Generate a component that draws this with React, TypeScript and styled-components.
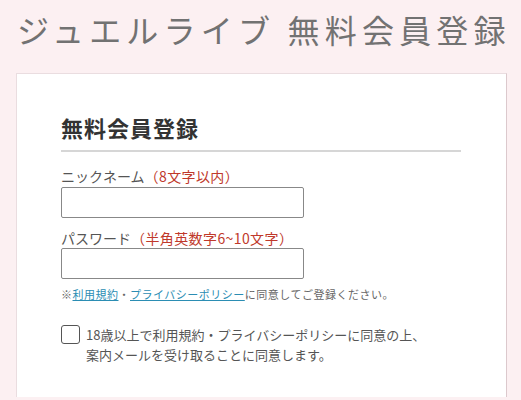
import React from 'react';
import styled, { createGlobalStyle } from 'styled-components';

const GlobalStyle = createGlobalStyle`
  body {
    margin: 0;
    background: #fcf0f2;
    font-family: 'Noto Sans CJK JP', 'Noto Sans', sans-serif;
    color: #555;
  }
`;

const Page = styled.div`
  padding: 5px 14px 0 16px;
`;

const PageTitle = styled.h1`
  margin: 0 0 20px 1px;
  font-size: 32px;
  line-height: 48px;
  font-weight: 400;
  letter-spacing: 5.2px;
  color: #727272;
  white-space: nowrap;
`;

const Card = styled.section`
  background: #fff;
  border: 1px solid #eadde0;
  border-right-color: #dcc9cd;
  border-bottom: none;
  padding: 38px 44px 32px;
`;

const Form = styled.div`
  width: 400px;
`;

const Heading = styled.h2`
  margin: 0;
  padding-bottom: 8px;
  border-bottom: 2px solid #d6d6d6;
  font-size: 22px;
  line-height: 30px;
  font-weight: 700;
  letter-spacing: 1px;
  color: #333;
`;

const Field = styled.div<{ $gap: number }>`
  margin-top: ${(p) => p.$gap}px;
`;

const Label = styled.div`
  font-size: 14px;
  line-height: 20px;
  color: #555;
`;

const Hint = styled.span`
  color: #c0392b;
  letter-spacing: 0.4px;
`;

const Input = styled.input`
  display: block;
  box-sizing: border-box;
  width: 243px;
  height: 31px;
  margin-top: 0.5px;
  border: 1px solid #888;
  border-radius: 2px;
  background: #fff;
`;

const Note = styled.p`
  margin: 7px 0 0;
  font-size: 11px;
  line-height: 16px;
  letter-spacing: 0.5px;
  color: #666;
`;

const TermLink = styled.a`
  color: #2b8db3;
  text-decoration: underline;
`;

const CheckRow = styled.label`
  display: flex;
  align-items: flex-start;
  gap: 6px;
  margin-top: 23px;
`;

const Box = styled.span`
  flex: none;
  box-sizing: border-box;
  width: 19px;
  height: 19px;
  border: 1px solid #555;
  border-radius: 3px;
  background: #fff;
`;

const CheckText = styled.span`
  font-size: 13px;
  line-height: 20px;
  color: #555;
`;

export default function App() {
  return (
    <>
      <GlobalStyle />
      <Page>
        <PageTitle>ジュエルライブ 無料会員登録</PageTitle>
        <Card>
          <Form>
            <Heading>無料会員登録</Heading>
            <Field $gap={14}>
              <Label>
                ニックネーム<Hint>（8文字以内）</Hint>
              </Label>
              <Input type="text" />
            </Field>
            <Field $gap={10}>
              <Label>
                パスワード<Hint>（半角英数字6~10文字）</Hint>
              </Label>
              <Input type="password" />
            </Field>
            <Note>
              ※<TermLink href="#">利用規約</TermLink>・
              <TermLink href="#">プライバシーポリシー</TermLink>に同意してご登録ください。
            </Note>
            <CheckRow>
              <Box />
              <CheckText>
                18歳以上で利用規約・プライバシーポリシーに同意の上、
                <br />
                案内メールを受け取ることに同意します。
              </CheckText>
            </CheckRow>
          </Form>
        </Card>
      </Page>
    </>
  );
}
